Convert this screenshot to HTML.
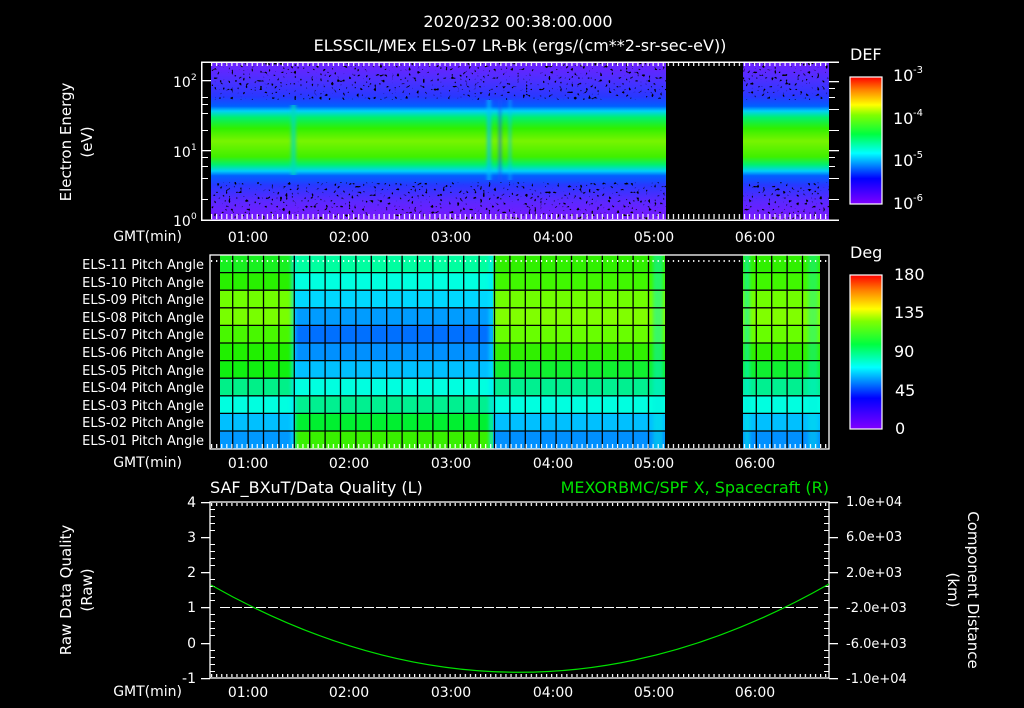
<!DOCTYPE html>
<html><head><meta charset="utf-8"><style>
html,body{margin:0;padding:0;background:#000;}
svg{display:block;}
text{font-family:"DejaVu Sans","Liberation Sans",sans-serif;fill:#fff;}
</style></head><body>
<svg width="1024" height="708" viewBox="0 0 1024 708" xmlns="http://www.w3.org/2000/svg">
<defs>
<linearGradient id="spec" x1="0" y1="0" x2="0" y2="1">
<stop offset="0" stop-color="#7020ff"/><stop offset="0.12" stop-color="#4a30ff"/>
<stop offset="0.22" stop-color="#2838ff"/><stop offset="0.28" stop-color="#0060ff"/>
<stop offset="0.31" stop-color="#00d0f8"/><stop offset="0.35" stop-color="#00f070"/>
<stop offset="0.42" stop-color="#30f000"/><stop offset="0.5" stop-color="#78f400"/>
<stop offset="0.6" stop-color="#40f000"/><stop offset="0.65" stop-color="#00f070"/>
<stop offset="0.69" stop-color="#00d0f8"/><stop offset="0.72" stop-color="#0060ff"/>
<stop offset="0.78" stop-color="#2838ff"/><stop offset="0.88" stop-color="#5a28ff"/>
<stop offset="1" stop-color="#7a18ff"/>
</linearGradient>
<linearGradient id="cbar" x1="0" y1="1" x2="0" y2="0">
<stop offset="0" stop-color="#8000ff"/><stop offset="0.2" stop-color="#0000ff"/>
<stop offset="0.4" stop-color="#00ffff"/><stop offset="0.55" stop-color="#00ff40"/>
<stop offset="0.7" stop-color="#80ff00"/><stop offset="0.78" stop-color="#ffff00"/>
<stop offset="0.9" stop-color="#ff8000"/><stop offset="1" stop-color="#ff0000"/>
</linearGradient>
<filter id="spk" x="0" y="0" width="1" height="1">
<feTurbulence type="fractalNoise" baseFrequency="0.35" numOctaves="1" seed="4"/>
<feColorMatrix type="matrix" values="0 0 0 0 0  0 0 0 0 0  0 0 0 0 0  12 0 0 0 -7.6"/>
</filter>
<filter id="blu" x="-1" y="0" width="3" height="1"><feGaussianBlur stdDeviation="1.5 0"/></filter>
<pattern id="tkT" x="211" y="0" width="5.075" height="10" patternUnits="userSpaceOnUse"><rect x="0" y="0" width="1.2" height="6" fill="#fff"/></pattern>
<pattern id="tkB" x="211" y="0" width="5.075" height="10" patternUnits="userSpaceOnUse"><rect x="0" y="4" width="1.2" height="6" fill="#fff"/></pattern>
</defs>

<text x="518" y="27" font-size="16" text-anchor="middle">2020/232 00:38:00.000</text>
<text x="520" y="51" font-size="16" text-anchor="middle">ELSSCIL/MEx ELS-07 LR-Bk  (ergs/(cm**2-sr-sec-eV))</text>

<!-- TOP PANEL -->
<rect x="211" y="62" width="618" height="158" fill="url(#spec)"/>
<g filter="url(#blu)">
<rect x="291" y="105" width="5" height="70" fill="#00d8c0" opacity="0.7"/>
<rect x="487" y="100" width="4" height="80" fill="#00c0ff" opacity="0.7"/>
<rect x="499" y="100" width="2" height="80" fill="#2050ff" opacity="0.8"/>
<rect x="509" y="100" width="2" height="80" fill="#00c0ff" opacity="0.7"/>
</g>
<rect x="211" y="62" width="618" height="38" filter="url(#spk)"/>
<rect x="211" y="182" width="618" height="38" filter="url(#spk)"/>
<rect x="666" y="62" width="77" height="158" fill="#000"/>
<rect x="201" y="62" width="1.5" height="158" fill="#fff"/>
<rect x="201" y="61.5" width="638" height="1.5" fill="#fff"/>
<rect x="201" y="219.5" width="638" height="1.5" fill="#fff"/>
<rect x="211" y="63" width="618" height="6" fill="url(#tkT)"/>
<rect x="211" y="213" width="618" height="6" fill="url(#tkB)"/>
<g fill="#fff">
<rect x="201" y="80" width="10" height="1.3"/><rect x="201" y="97" width="7" height="1"/><rect x="201" y="104" width="7" height="1"/><rect x="201" y="113" width="7" height="1"/><rect x="201" y="130" width="7" height="1"/>
<rect x="201" y="150" width="10" height="1.3"/><rect x="201" y="157" width="7" height="1"/><rect x="201" y="166" width="7" height="1"/><rect x="201" y="178" width="7" height="1"/><rect x="201" y="199" width="7" height="1"/>
<rect x="829" y="81" width="10" height="1.3"/><rect x="829" y="88" width="6" height="1"/><rect x="829" y="97" width="6" height="1"/><rect x="829" y="109" width="10" height="1"/><rect x="829" y="130" width="10" height="1"/>
<rect x="829" y="150" width="10" height="1.3"/><rect x="829" y="157" width="6" height="1"/><rect x="829" y="166" width="6" height="1"/><rect x="829" y="178" width="10" height="1"/><rect x="829" y="199" width="10" height="1"/>
</g>
<text x="173" y="87" font-size="14">10</text><text x="191" y="80" font-size="9">2</text>
<text x="173" y="157" font-size="14">10</text><text x="191" y="150" font-size="9">1</text>
<text x="173" y="226" font-size="14">10</text><text x="191" y="219" font-size="9">0</text>
<text transform="translate(71,142) rotate(-90)" font-size="15" text-anchor="middle">Electron Energy</text>
<text transform="translate(92,142) rotate(-90)" font-size="15" text-anchor="middle">(eV)</text>
<g font-size="14">
<text x="182" y="241" text-anchor="end">GMT(min)</text>
<text x="248" y="242" text-anchor="middle">01:00</text><text x="349" y="242" text-anchor="middle">02:00</text>
<text x="451" y="242" text-anchor="middle">03:00</text><text x="553" y="242" text-anchor="middle">04:00</text>
<text x="654" y="242" text-anchor="middle">05:00</text><text x="755" y="242" text-anchor="middle">06:00</text>
</g>
<text x="850" y="60" font-size="16">DEF</text>
<rect x="850" y="77" width="32" height="127" fill="url(#cbar)" stroke="#fff" stroke-width="1.2"/>
<g font-size="16"><text x="893" y="81">10</text><text x="893" y="124">10</text><text x="893" y="166">10</text><text x="893" y="209">10</text></g>
<g font-size="10"><text x="913" y="73">-3</text><text x="913" y="116">-4</text><text x="913" y="158">-5</text><text x="913" y="201">-6</text></g>

<!-- MIDDLE PANEL -->
<g>
<rect x="220" y="255" width="75" height="17.6" fill="#18f020"/>
<rect x="220" y="272.6" width="75" height="17.6" fill="#28f000"/>
<rect x="220" y="290.2" width="75" height="17.6" fill="#70ff00"/>
<rect x="220" y="307.8" width="75" height="17.6" fill="#78ff00"/>
<rect x="220" y="325.4" width="75" height="17.6" fill="#48f800"/>
<rect x="220" y="343" width="75" height="17.6" fill="#20f000"/>
<rect x="220" y="360.6" width="75" height="17.6" fill="#10f010"/>
<rect x="220" y="378.2" width="75" height="17.6" fill="#00f088"/>
<rect x="220" y="395.8" width="75" height="17.6" fill="#00ffe0"/>
<rect x="220" y="413.4" width="75" height="17.6" fill="#00c0ff"/>
<rect x="220" y="431" width="75" height="18" fill="#0098ff"/>
<rect x="295" y="255" width="198" height="17.6" fill="#00ffa0"/>
<rect x="295" y="272.6" width="198" height="17.6" fill="#00ffe0"/>
<rect x="295" y="290.2" width="198" height="17.6" fill="#00d8ff"/>
<rect x="295" y="307.8" width="198" height="17.6" fill="#009cff"/>
<rect x="295" y="325.4" width="198" height="17.6" fill="#0070ff"/>
<rect x="295" y="343" width="198" height="17.6" fill="#0090ff"/>
<rect x="295" y="360.6" width="198" height="17.6" fill="#00c0ff"/>
<rect x="295" y="378.2" width="198" height="17.6" fill="#00ffe0"/>
<rect x="295" y="395.8" width="198" height="17.6" fill="#00f090"/>
<rect x="295" y="413.4" width="198" height="17.6" fill="#00f030"/>
<rect x="295" y="431" width="198" height="18" fill="#38f000"/>
<rect x="493" y="255" width="172" height="17.6" fill="#30f000"/>
<rect x="493" y="272.6" width="172" height="17.6" fill="#40f800"/>
<rect x="493" y="290.2" width="172" height="17.6" fill="#70ff00"/>
<rect x="493" y="307.8" width="172" height="17.6" fill="#80ff00"/>
<rect x="493" y="325.4" width="172" height="17.6" fill="#68ff00"/>
<rect x="493" y="343" width="172" height="17.6" fill="#30f000"/>
<rect x="493" y="360.6" width="172" height="17.6" fill="#10f030"/>
<rect x="493" y="378.2" width="172" height="17.6" fill="#00f090"/>
<rect x="493" y="395.8" width="172" height="17.6" fill="#00ffe0"/>
<rect x="493" y="413.4" width="172" height="17.6" fill="#00c0ff"/>
<rect x="493" y="431" width="172" height="18" fill="#0090ff"/>
<g transform="translate(250,0)">
<rect x="493" y="255" width="77" height="17.6" fill="#30f000"/>
<rect x="493" y="272.6" width="77" height="17.6" fill="#40f800"/>
<rect x="493" y="290.2" width="77" height="17.6" fill="#70ff00"/>
<rect x="493" y="307.8" width="77" height="17.6" fill="#80ff00"/>
<rect x="493" y="325.4" width="77" height="17.6" fill="#68ff00"/>
<rect x="493" y="343" width="77" height="17.6" fill="#30f000"/>
<rect x="493" y="360.6" width="77" height="17.6" fill="#10f030"/>
<rect x="493" y="378.2" width="77" height="17.6" fill="#00f090"/>
<rect x="493" y="395.8" width="77" height="17.6" fill="#00ffe0"/>
<rect x="493" y="413.4" width="77" height="17.6" fill="#00c0ff"/>
<rect x="493" y="431" width="77" height="18" fill="#0090ff"/>
</g>
<g filter="url(#blu)">
<rect x="291" y="255" width="5" height="194" fill="#00e8ff" opacity="0.6"/>
<rect x="489" y="255" width="5" height="194" fill="#00e8ff" opacity="0.6"/>
<rect x="653" y="255" width="10" height="194" fill="#00f0e0" opacity="0.45"/>
<rect x="744" y="255" width="6" height="194" fill="#00f0e0" opacity="0.5"/>
<rect x="808" y="255" width="10" height="194" fill="#00f0e0" opacity="0.35"/>
</g>
</g>
<g stroke="#000" stroke-width="1.3">
<path d="M220 272.6H820M220 290.2H820M220 307.8H820M220 325.4H820M220 343H820M220 360.6H820M220 378.2H820M220 395.8H820M220 413.4H820M220 431H820"/>
<path d="M232.7 255V449M248.1 255V449M263.5 255V449M278.9 255V449M294.3 255V449M309.7 255V449M325.1 255V449M340.5 255V449M355.9 255V449M371.3 255V449M386.7 255V449M402.1 255V449M417.5 255V449M432.9 255V449M448.3 255V449M463.7 255V449M479.1 255V449M494.5 255V449M509.9 255V449M525.3 255V449M540.7 255V449M556.1 255V449M571.5 255V449M586.9 255V449M602.3 255V449M617.7 255V449M633.1 255V449M648.5 255V449M756.3 255V449M771.7 255V449M787.1 255V449M802.5 255V449"/>
</g>
<rect x="665" y="255" width="78" height="194" fill="#000"/>
<rect x="820" y="255" width="9" height="194" fill="#000"/>
<rect x="211" y="255" width="9" height="194" fill="#000"/>
<rect x="210" y="255" width="619" height="194" fill="none" stroke="#fff" stroke-width="1.3"/>
<rect x="211" y="256" width="618" height="6" fill="url(#tkT)"/>
<rect x="211" y="442" width="618" height="6" fill="url(#tkB)"/>
<g font-size="13" text-anchor="end">
<text x="204" y="269">ELS-11 Pitch Angle</text><text x="204" y="287">ELS-10 Pitch Angle</text>
<text x="204" y="304">ELS-09 Pitch Angle</text><text x="204" y="322">ELS-08 Pitch Angle</text>
<text x="204" y="339">ELS-07 Pitch Angle</text><text x="204" y="357">ELS-06 Pitch Angle</text>
<text x="204" y="375">ELS-05 Pitch Angle</text><text x="204" y="392">ELS-04 Pitch Angle</text>
<text x="204" y="410">ELS-03 Pitch Angle</text><text x="204" y="427">ELS-02 Pitch Angle</text>
<text x="204" y="445">ELS-01 Pitch Angle</text>
</g>
<g font-size="14">
<text x="182" y="467" text-anchor="end">GMT(min)</text>
<text x="248" y="468" text-anchor="middle">01:00</text><text x="349" y="468" text-anchor="middle">02:00</text>
<text x="451" y="468" text-anchor="middle">03:00</text><text x="553" y="468" text-anchor="middle">04:00</text>
<text x="654" y="468" text-anchor="middle">05:00</text><text x="755" y="468" text-anchor="middle">06:00</text>
</g>
<text x="850" y="258" font-size="16">Deg</text>
<rect x="850" y="275" width="32" height="154" fill="url(#cbar)" stroke="#fff" stroke-width="1.2"/>
<g font-size="16"><text x="894" y="280">180</text><text x="894" y="318">135</text><text x="894" y="357">90</text><text x="895" y="396">45</text><text x="895" y="434">0</text></g>

<!-- BOTTOM PANEL -->
<text x="210" y="493" font-size="16">SAF_BXuT/Data Quality (L)</text>
<text x="829" y="493" font-size="16" text-anchor="end" style="fill:#00e000">MEXORBMC/SPF X, Spacecraft (R)</text>
<rect x="210" y="502" width="619" height="176" fill="none" stroke="#fff" stroke-width="1.3"/>
<rect x="211" y="503" width="618" height="6" fill="url(#tkT)"/>
<rect x="211" y="671" width="618" height="6" fill="url(#tkB)"/>
<g fill="#fff">
<rect x="201" y="502" width="9" height="1.3"/><rect x="201" y="537" width="9" height="1.3"/><rect x="201" y="572" width="9" height="1.3"/><rect x="201" y="607" width="9" height="1.3"/><rect x="201" y="643" width="9" height="1.3"/><rect x="201" y="678" width="9" height="1.3"/>
<rect x="829" y="502" width="9" height="1.3"/><rect x="829" y="537" width="9" height="1.3"/><rect x="829" y="572" width="9" height="1.3"/><rect x="829" y="607" width="9" height="1.3"/><rect x="829" y="643" width="9" height="1.3"/><rect x="829" y="678" width="9" height="1.3"/>
<rect x="210" y="509" width="5" height="1"/><rect x="210" y="516" width="5" height="1"/><rect x="210" y="523" width="5" height="1"/><rect x="210" y="530" width="5" height="1"/>
<rect x="210" y="544" width="5" height="1"/><rect x="210" y="551" width="5" height="1"/><rect x="210" y="558" width="5" height="1"/><rect x="210" y="565" width="5" height="1"/>
<rect x="210" y="579" width="5" height="1"/><rect x="210" y="586" width="5" height="1"/><rect x="210" y="593" width="5" height="1"/><rect x="210" y="600" width="5" height="1"/>
<rect x="210" y="614" width="5" height="1"/><rect x="210" y="621" width="5" height="1"/><rect x="210" y="628" width="5" height="1"/><rect x="210" y="635" width="5" height="1"/>
<rect x="210" y="650" width="5" height="1"/><rect x="210" y="657" width="5" height="1"/><rect x="210" y="664" width="5" height="1"/><rect x="210" y="671" width="5" height="1"/>
<rect x="824" y="509" width="5" height="1"/><rect x="824" y="516" width="5" height="1"/><rect x="824" y="523" width="5" height="1"/><rect x="824" y="530" width="5" height="1"/>
<rect x="824" y="544" width="5" height="1"/><rect x="824" y="551" width="5" height="1"/><rect x="824" y="558" width="5" height="1"/><rect x="824" y="565" width="5" height="1"/>
<rect x="824" y="579" width="5" height="1"/><rect x="824" y="586" width="5" height="1"/><rect x="824" y="593" width="5" height="1"/><rect x="824" y="600" width="5" height="1"/>
<rect x="824" y="614" width="5" height="1"/><rect x="824" y="621" width="5" height="1"/><rect x="824" y="628" width="5" height="1"/><rect x="824" y="635" width="5" height="1"/>
<rect x="824" y="650" width="5" height="1"/><rect x="824" y="657" width="5" height="1"/><rect x="824" y="664" width="5" height="1"/><rect x="824" y="671" width="5" height="1"/>
</g>
<line x1="220" y1="607.5" x2="819" y2="607.5" stroke="#fff" stroke-width="1" stroke-dasharray="10 2"/>
<path d="M211 585 Q520 760 829 584" fill="none" stroke="#00e000" stroke-width="1.2"/>
<g font-size="14" text-anchor="end">
<text x="196" y="507">4</text><text x="196" y="542">3</text><text x="196" y="577">2</text><text x="196" y="612">1</text><text x="196" y="648">0</text><text x="196" y="683">-1</text>
</g>
<g font-size="13">
<text x="846" y="506">1.0e+04</text><text x="846" y="541">6.0e+03</text><text x="846" y="577">2.0e+03</text>
<text x="846" y="612">-2.0e+03</text><text x="846" y="648">-6.0e+03</text><text x="846" y="683">-1.0e+04</text>
</g>
<text transform="translate(71,590) rotate(-90)" font-size="15" text-anchor="middle">Raw Data Quality</text>
<text transform="translate(92,590) rotate(-90)" font-size="15" text-anchor="middle">(Raw)</text>
<text transform="translate(968,590) rotate(90)" font-size="15" text-anchor="middle">Component Distance</text>
<text transform="translate(948,590) rotate(90)" font-size="15" text-anchor="middle">(km)</text>
<g font-size="14">
<text x="182" y="696" text-anchor="end">GMT(min)</text>
<text x="248" y="697" text-anchor="middle">01:00</text><text x="349" y="697" text-anchor="middle">02:00</text>
<text x="451" y="697" text-anchor="middle">03:00</text><text x="553" y="697" text-anchor="middle">04:00</text>
<text x="654" y="697" text-anchor="middle">05:00</text><text x="755" y="697" text-anchor="middle">06:00</text>
</g>
</svg>
</body></html>
